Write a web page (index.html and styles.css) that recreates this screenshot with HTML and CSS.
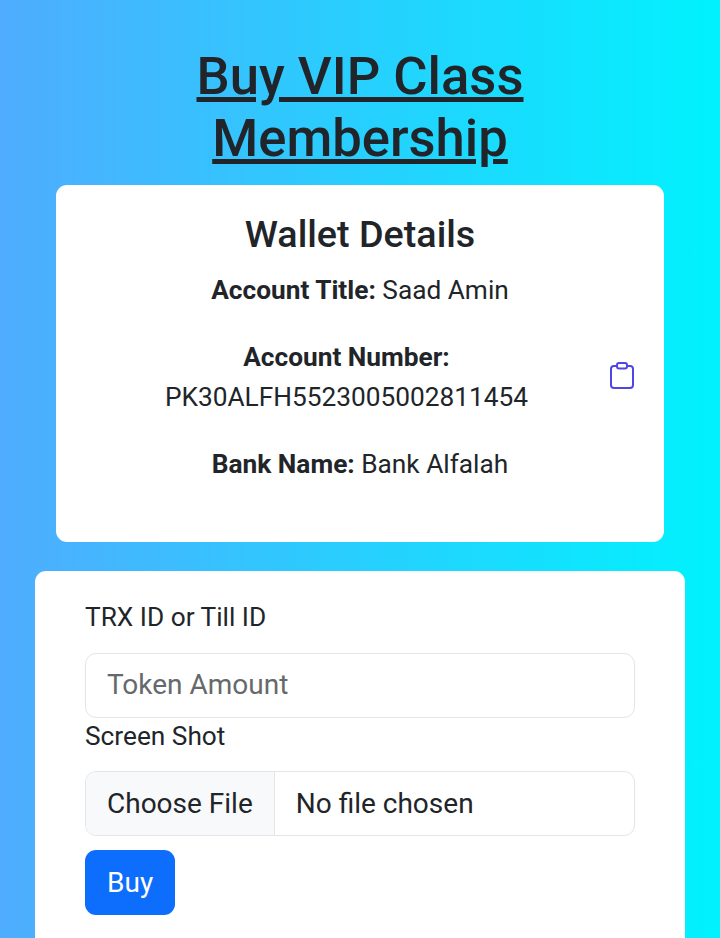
FILE: index.html
```html
<!DOCTYPE html>
<html lang="en">
<head>
    <meta charset="UTF-8">
    <meta name="viewport" content="width=device-width, initial-scale=1.0">
    <title>Buy VIP Class Membership</title>
    <link rel="stylesheet" href="styles.css">
</head>
<body>
    <h1 class="page-title">Buy VIP Class Membership</h1>

    <div class="wallet-card">
        <h3>Wallet Details</h3>
        <p><strong>Account Title:</strong> Saad Amin</p>
        <div class="account-row">
            <p><strong>Account Number:</strong> PK30ALFH5523005002811454</p>
            <button class="copy-icon" type="button" aria-label="Copy account number">
                <svg width="26" height="28" viewBox="0 0 26 28" fill="none" stroke="#4f46e5" stroke-width="2" stroke-linecap="round" stroke-linejoin="round">
                    <path d="M7 5H5a3 3 0 0 0-3 3v16a3 3 0 0 0 3 3h16a3 3 0 0 0 3-3V8a3 3 0 0 0-3-3h-2"/>
                    <rect x="8" y="2" width="10" height="5.5" rx="2"/>
                </svg>
            </button>
        </div>
        <p><strong>Bank Name:</strong> Bank Alfalah</p>
    </div>

    <form class="buy-card">
        <label for="trx">TRX ID or Till ID</label>
        <input class="form-control" id="trx" type="text" placeholder="Token Amount">
        <label class="label-tight" for="shot">Screen Shot</label>
        <input class="form-control file-input" id="shot" type="file">
        <button class="btn-buy" type="button">Buy</button>
    </form>
</body>
</html>
```

FILE: styles.css
```css
/* General */
* {
    box-sizing: border-box;
}

html, body {
    height: 938px;
    overflow: hidden;
}

body {
    margin: 0;
    padding: 45px 35px 0;
    font-family: Roboto, "Liberation Sans", sans-serif;
    font-size: 26.25px;
    line-height: 40px;
    color: #212529;
    background: linear-gradient(to right, #4facfe 0%, #00f2fe 100%);
}

.page-title {
    margin: 0 70px 16px;
    font-size: 52.6px;
    font-weight: 500;
    line-height: 62px;
    text-align: center;
    text-decoration: underline;
}

/* Wallet card */
.wallet-card {
    margin: 0 21px 29px;
    padding: 26px 25px 0;
    height: 357px;
    background-color: #fff;
    border-radius: 11px;
    text-align: center;
}

.wallet-card h3 {
    margin: 0 0 13px;
    font-size: 37.7px;
    font-weight: 500;
    line-height: 46px;
}

.wallet-card p {
    margin: 0 0 27px;
}

.wallet-card strong {
    font-weight: 700;
}

.account-row {
    display: flex;
    align-items: center;
}

.account-row p {
    flex: 1;
    margin-left: 3px;
}

.copy-icon {
    display: flex;
    padding: 0;
    margin: 0 4px 31px 0;
    background: none;
    border: none;
}

/* Form card */
.buy-card {
    padding: 26px 50px 0;
    height: 377px;
    background-color: #fff;
    border-radius: 11px;
}

.buy-card label {
    display: block;
    margin-bottom: 16px;
}

.buy-card .label-tight {
    margin-bottom: 17px;
    line-height: 36px;
}

.form-control {
    display: block;
    width: 100%;
    height: 65px;
    padding: 0 21px 2px;
    font-family: inherit;
    font-size: 28px;
    color: #212529;
    background-color: #fff;
    border: 1px solid #e3e5e8;
    border-radius: 11px;
}

.form-control::placeholder {
    color: #66696c;
}

.file-input {
    padding: 0;
    line-height: 63px;
    overflow: hidden;
}

.file-input::file-selector-button {
    height: 63px;
    margin: 0 21px 0 0;
    padding: 0 21px;
    font-family: inherit;
    font-size: 28px;
    color: #212529;
    background-color: #f8f9fa;
    border: none;
    border-right: 1px solid #e3e5e8;
    border-radius: 0;
}

.btn-buy {
    display: block;
    margin-top: 14px;
    height: 65px;
    padding: 0 22px;
    font-family: inherit;
    font-size: 28px;
    color: #fff;
    background-color: #0d6efd;
    border: none;
    border-radius: 11px;
}
```
